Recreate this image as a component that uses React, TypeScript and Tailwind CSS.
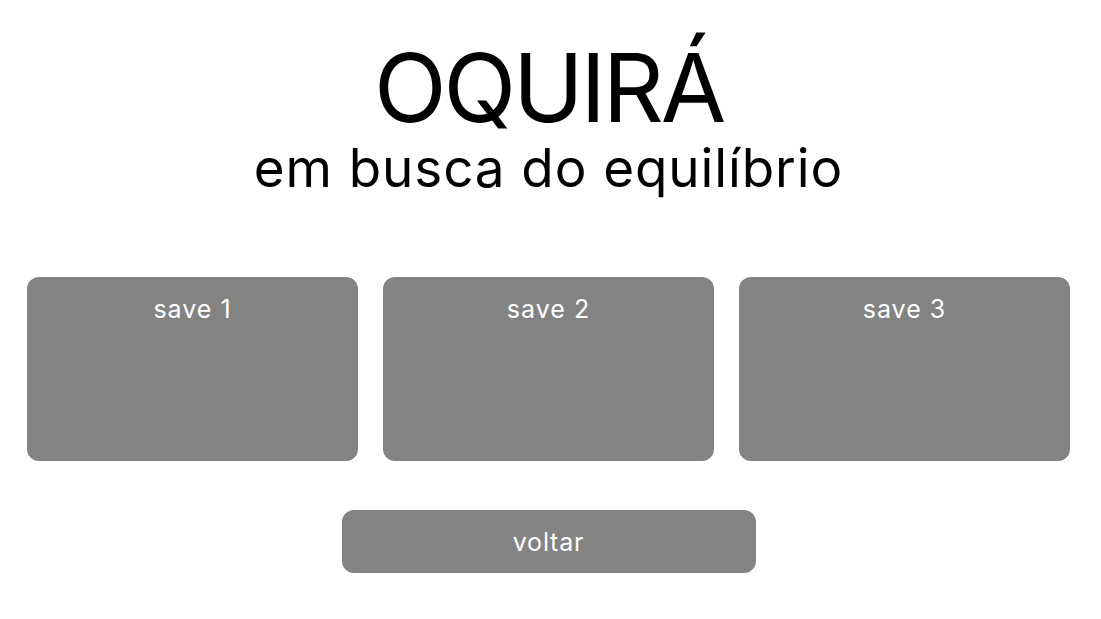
export default function App() {
  const saves = ["save 1", "save 2", "save 3"];

  return (
    <div className="w-[1101px] h-[619px] bg-white">
      <div
        className="w-[1097px] flex flex-col items-center"
        style={{ fontFamily: "Inter, 'Noto Sans', sans-serif" }}
      >
        {/* Title */}
        <div className="mt-[34px] flex flex-col items-center text-black">
          <h1 className="text-[95px] leading-[108px] tracking-[-3.2px] font-normal">OQUIRÁ</h1>
          <p className="text-[53px] leading-[52px] tracking-[0.9px] font-normal">em busca do equilíbrio</p>
        </div>

        {/* Save slots */}
        <div className="mt-[83px] flex gap-[25px]">
          {saves.map((s) => (
            <button
              key={s}
              className="w-[331px] h-[184px] rounded-[12px] bg-[#838383] text-white text-[25px] tracking-[1px] flex justify-center pt-[14px]"
            >
              {s}
            </button>
          ))}
        </div>

        {/* Back */}
        <button className="mt-[49px] w-[414px] h-[63px] rounded-[12px] bg-[#838383] text-white text-[25px] tracking-[0.8px] flex items-center justify-center pt-[2px]">
          voltar
        </button>
      </div>
    </div>
  );
}
